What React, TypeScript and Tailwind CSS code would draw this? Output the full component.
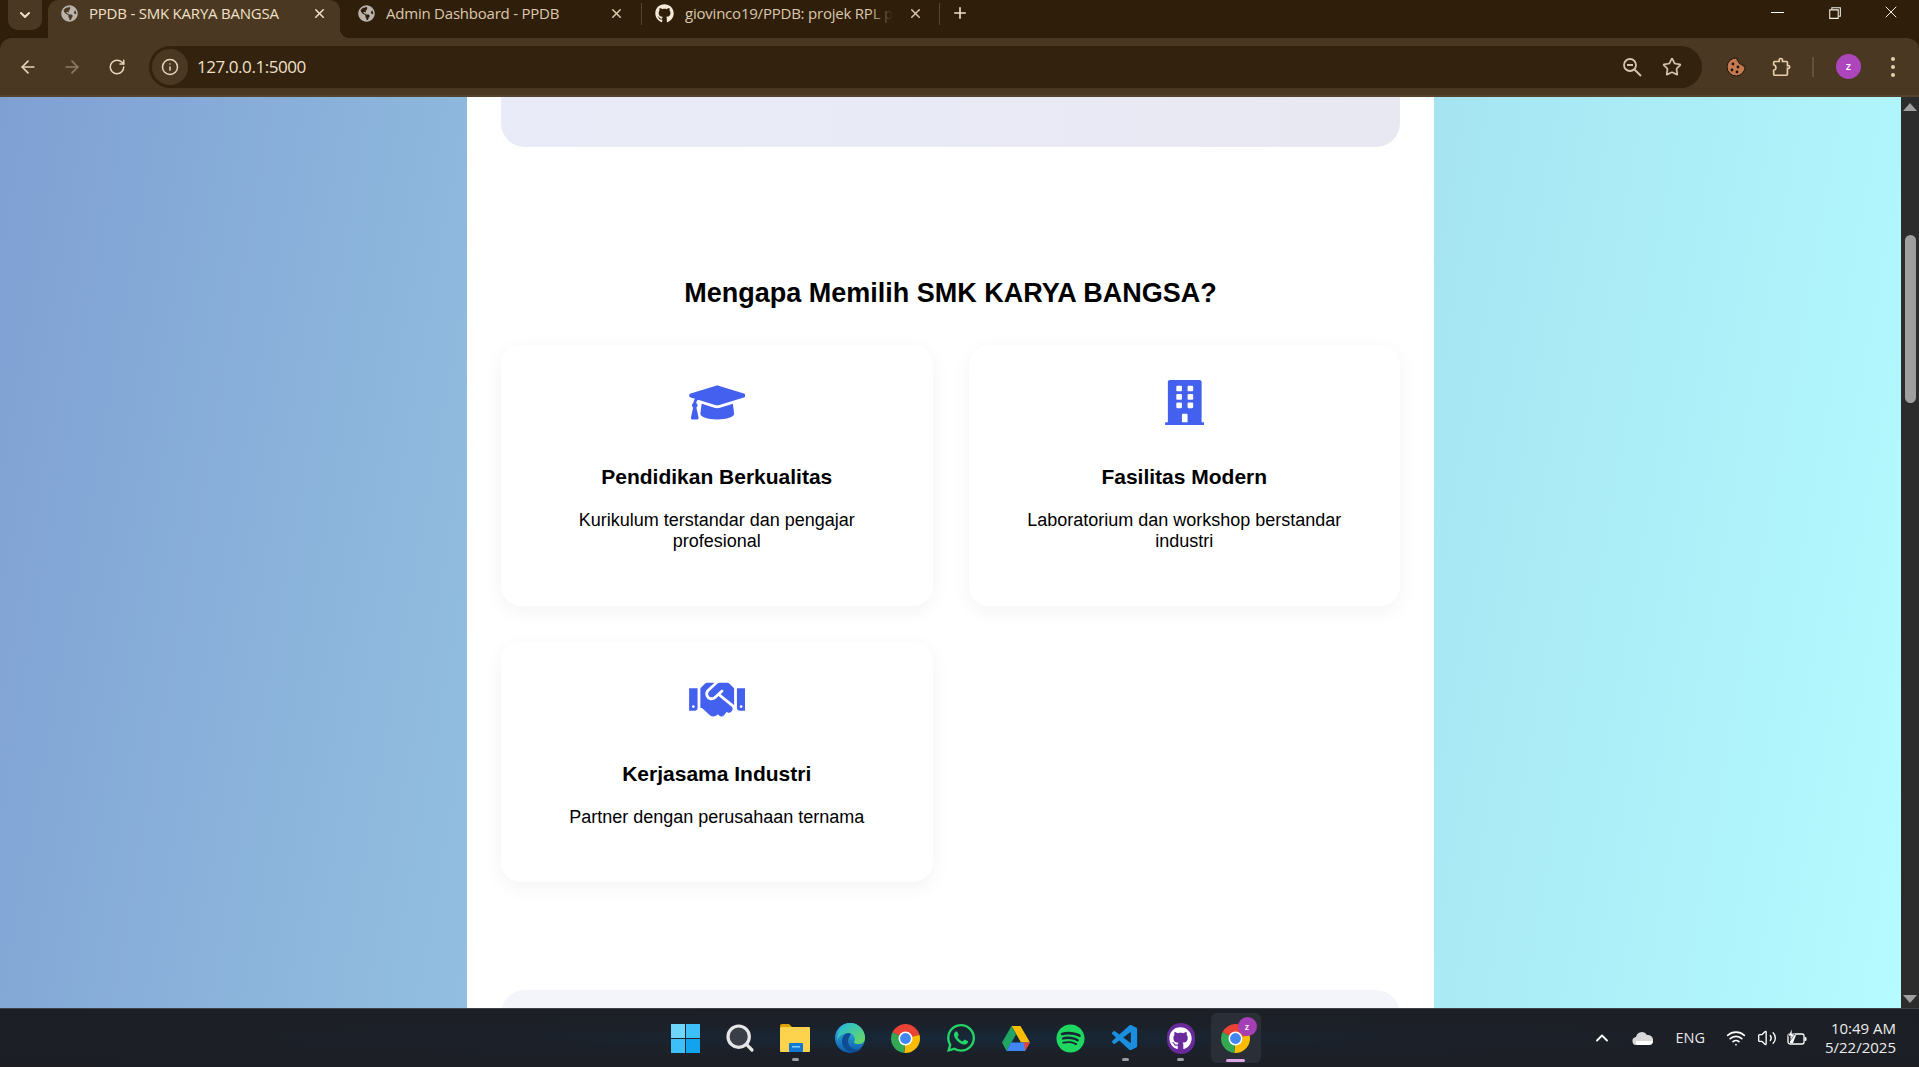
import { ArrowLeft, ArrowRight, RotateCw, Info, Star, X, Plus, ChevronDown, ChevronUp, Wifi, Volume2, Search } from "lucide-react";
import { FaGraduationCap, FaBuilding, FaHandshake, FaGlobeAmericas, FaGithub, FaWhatsapp, FaSpotify } from "react-icons/fa";
import { VscChromeRestore, VscVscode } from "react-icons/vsc";

const uiFont = "font-['Open_Sans',sans-serif]";

function Tab({ title, active, github, fade }: { title: string; active?: boolean; github?: boolean; fade?: boolean }) {
    return (
        <div className={`relative flex items-center h-[38px] w-[292px] pl-[13px] pb-[11px] rounded-t-[10px] ${active ? "bg-[#4b3822] text-[#f0e0c8]" : "text-[#dcc8ac]"}`}>
            {active && <span className="absolute bottom-0 -right-[10px] w-[10px] h-[10px] bg-[radial-gradient(circle_at_100%_0,#2f1e0a_10px,#4b3822_10.5px)]" />}
            {github ? <FaGithub className="text-[#f5ead8] text-[19px] shrink-0" /> : <FaGlobeAmericas className="text-[#b9b3ab] text-[17px] shrink-0" />}
            <div className="relative ml-[11px] w-[208px] overflow-hidden whitespace-nowrap text-[15px] tracking-[-0.22px]">
                {title}
                {fade && <span className="absolute right-0 top-0 h-full w-[24px] bg-gradient-to-r from-transparent to-[#2f1e0a]" />}
            </div>
            <X className="ml-[15px] shrink-0" size={15} strokeWidth={2.4} />
        </div>
    );
}

function ChromeLogo({ size = 29 }: { size?: number }) {
    return (
        <svg width={size} height={size} viewBox="0 0 48 48">
            <path d="M24 24L2.25 13.85A24 24 0 0 1 47.18 17.79Z" fill="#ea4335" />
            <path d="M24 24L47.18 17.79A24 24 0 0 1 21.9 47.9Z" fill="#fbbc04" />
            <path d="M24 24L21.9 47.9A24 24 0 0 1 2.25 13.85Z" fill="#34a853" />
            <circle cx="24" cy="24" r="11.5" fill="#fff" />
            <circle cx="24" cy="24" r="9" fill="#4285f4" />
        </svg>
    );
}

function FeatureCard({ icon, title, text }: { icon: React.ReactNode; title: string; text: string }) {
    return (
        <div className="bg-white rounded-[20px] shadow-[0_5px_20px_rgba(0,0,0,0.05)] pt-[35px] pb-[54px] px-[35px] text-center">
            <div className="h-[45px] flex justify-center text-[#4361ee]">{icon}</div>
            <h3 className="mt-[40px] text-[21px] leading-[24px] font-bold">{title}</h3>
            <p className="mt-[21px] text-[18px] leading-[21px]">{text}</p>
        </div>
    );
}

function TaskIcon({ children, dot }: { children: React.ReactNode; dot?: boolean }) {
    return (
        <div className="relative w-[55.1px] h-[50px] flex items-center justify-center">
            {children}
            {dot && <span className="absolute bottom-[2px] w-[7px] h-[3px] rounded-full bg-[#9a9da3]" />}
        </div>
    );
}

export default function App() {
    return (
        <div className="h-screen flex flex-col overflow-hidden font-['Liberation_Sans',Arial,sans-serif] text-black">
            {/* browser chrome */}
            <div className={`bg-[#2f1e0a] ${uiFont}`}>
                <div className="h-[38px] flex items-start pl-[8px]">
                    <div className="w-[34px] h-[30px] bg-[#4b3822] rounded-b-[10px] flex items-center justify-center text-[#f0e0c8]">
                        <ChevronDown size={16} strokeWidth={3} />
                    </div>
                    <div className="ml-[6px] flex">
                        <Tab title="PPDB - SMK KARYA BANGSA" active />
                        <div className="w-[5px]" />
                        <Tab title="Admin Dashboard - PPDB" />
                        <div className="ml-[4px] w-px h-[22px] mt-[3px] bg-[#5a4630]" />
                        <Tab title="giovinco19/PPDB: projek RPL pe" github fade />
                        <div className="ml-[5px] w-px h-[22px] mt-[3px] bg-[#5a4630]" />
                    </div>
                    <Plus className="ml-[11px] mt-[4px] text-[#f0e0c8]" size={18} strokeWidth={2.2} />
                    <div className="ml-auto flex items-start text-[#f4eee6]">
                        <div className="w-[58px] h-[24px] flex items-center justify-center"><span className="w-[13px] h-px bg-white" /></div>
                        <div className="w-[57px] h-[24px] flex items-center justify-center"><VscChromeRestore size={17} /></div>
                        <div className="w-[56px] h-[24px] flex items-center justify-center"><X size={20} strokeWidth={1.2} /></div>
                    </div>
                </div>
                <div className="h-[59px] bg-[#4b3822] rounded-t-[12px] border-b-2 border-[#55432e] flex items-center text-[#e8d5bb]">
                    <ArrowLeft className="ml-[18px]" size={20} />
                    <ArrowRight className="ml-[24px] text-[#8c7b66]" size={20} />
                    <RotateCw className="ml-[26px]" size={18} />
                    <div className="ml-[23px] w-[1553px] h-[42px] rounded-full bg-[#33220e] flex items-center">
                        <div className="ml-[3px] w-[36px] h-[36px] rounded-full bg-[#4b3822] flex items-center justify-center">
                            <Info size={18} />
                        </div>
                        <span className="ml-[9px] text-[17px] tracking-[-0.45px] text-[#f0e0c8]">127.0.0.1:5000</span>
                        <svg className="ml-auto text-[#d5c5ae]" width="20" height="20" viewBox="0 0 20 20" fill="none" stroke="currentColor" strokeWidth="1.8">
                            <circle cx="8" cy="8" r="6" />
                            <path d="M12.5 12.500L19 19M5 8h6" />
                        </svg>
                        <Star className="ml-[20px] mr-[20px] text-[#d5c5ae]" size={20} />
                    </div>
                    <svg className="ml-[24px]" width="20" height="20" viewBox="0 0 20 20">
                        <path d="M11 1a9 9 0 1 0 8 8c-1.500.5-3-.2-3.300-1.700-1.500.2-2.800-.800-2.900-2.300C11.500 4.700 10.800 2.500 11 1z" fill="#c67a50" stroke="#20140a" strokeWidth="1" />
                        <circle cx="7" cy="7" r="1.400" fill="#20140a" /><circle cx="12" cy="10" r="1.400" fill="#20140a" />
                        <circle cx="6" cy="13" r="1.400" fill="#20140a" /><circle cx="11" cy="15" r="1.400" fill="#20140a" />
                    </svg>
                    <svg className="ml-[24px] text-[#e8cfae]" width="22" height="22" viewBox="0 0 24 24" fill="none" stroke="currentColor" strokeWidth="1.800">
                        <path d="M5 6h5V4.500a1.800 1.800 0 0 1 3.600 0V6h4.400a1 1 0 0 1 1 1v3.500h1a1.500 1.500 0 0 1 0 3h-1V20a1 1 0 0 1-1 1H5a1 1 0 0 1-1-1v-4.500c2-.5 2.500-1.500 2.500-2.500S6 10 4 9.500V7a1 1 0 0 1 1-1z" />
                    </svg>
                    <div className="ml-[20px] w-[2px] h-[20px] bg-[#65513a]" />
                    <div className="ml-[22px] w-[25px] h-[25px] rounded-full bg-[#ad45bd] flex items-center justify-center text-white text-[11px] font-semibold">z</div>
                    <div className="ml-[30px] flex flex-col gap-[4px]">
                        <span className="w-[4px] h-[4px] rounded-full bg-[#e8cfae]" />
                        <span className="w-[4px] h-[4px] rounded-full bg-[#e8cfae]" />
                        <span className="w-[4px] h-[4px] rounded-full bg-[#e8cfae]" />
                    </div>
                </div>
            </div>

            {/* page */}
            <div className="flex-1 min-h-0 flex">
                <div className="flex-1 flex justify-center overflow-hidden bg-[linear-gradient(100deg,#7fa0d3_0%,#8fbade_25%,#a8e8f4_75%,#b5fbff_100%)]">
                    <div className="w-[967px] bg-white px-[34px]">
                        <div className="h-[50px] rounded-b-[24px] bg-gradient-to-r from-[#e9ecf8] to-[#e8e8f2]" />
                        <h2 className="mt-[130px] text-center text-[27px] leading-[32px] font-bold">Mengapa Memilih SMK KARYA BANGSA?</h2>
                        <div className="mt-[36px] grid grid-cols-2 gap-[36px]">
                            <FeatureCard icon={<FaGraduationCap className="w-[56.5px] h-[45px]" />} title="Pendidikan Berkualitas" text="Kurikulum terstandar dan pengajar profesional" />
                            <FeatureCard icon={<FaBuilding className="w-[39.5px] h-[45px]" />} title="Fasilitas Modern" text="Laboratorium dan workshop berstandar industri" />
                            <FeatureCard icon={<FaHandshake className="w-[56.5px] h-[45px]" />} title="Kerjasama Industri" text="Partner dengan perusahaan ternama" />
                        </div>
                        <div className="mt-[108px] h-[60px] rounded-t-[24px] bg-[#f3f5fb]" />
                    </div>
                </div>
                <div className="w-[18px] bg-[#2c2c2c] flex flex-col items-center">
                    <span className="mt-[6px] w-0 h-0 border-x-[7px] border-x-transparent border-b-[8px] border-b-[#9f9f9f]" />
                    <span className="mt-[124px] w-[11px] h-[168px] rounded-full bg-[#9f9f9f]" />
                    <span className="mt-auto mb-[5px] w-0 h-0 border-x-[7px] border-x-transparent border-t-[8px] border-t-[#9f9f9f]" />
                </div>
            </div>

            {/* taskbar */}
            <div className={`h-[59px] shrink-0 border-t border-[#3c4048] bg-[radial-gradient(ellipse_at_50%_50%,#16293a_0%,#1c2028_35%,#1c1e24_100%)] grid grid-cols-[1fr_auto_1fr] items-center text-white ${uiFont}`}>
                <div />
                <div className="flex items-center pl-[2px]">
                    <TaskIcon>
                        <div className="grid grid-cols-2 gap-px w-[29px] h-[29px]">
                            <span className="bg-[#6fd6fb]" /><span className="bg-[#3cc0f7]" />
                            <span className="bg-[#3cc0f7]" /><span className="bg-[#12a3ef]" />
                        </div>
                    </TaskIcon>
                    <TaskIcon>
                        <Search className="text-[#e6e6e6] fill-[#3a3e46]" size={32} strokeWidth={2.4} />
                    </TaskIcon>
                    <TaskIcon dot>
                        <svg width="30" height="28" viewBox="0 0 30 28">
                            <path d="M0 2a2 2 0 0 1 2-2h7l3 3h-12z" fill="#e0a100" />
                            <rect x="0" y="3" width="30" height="25" rx="1" fill="#fdd34d" />
                            <rect x="9" y="19" width="14" height="9" rx="1" fill="#0f78d4" />
                            <rect x="12" y="22" width="8" height="1.500" fill="#7fd0f7" />
                        </svg>
                    </TaskIcon>
                    <TaskIcon>
                        <svg width="30" height="30" viewBox="0 0 30 30">
                            <defs>
                                <linearGradient id="edgeA" x1="0" y1="0" x2="0" y2="1"><stop offset="0" stopColor="#35c1f1" /><stop offset="1" stopColor="#0c59a4" /></linearGradient>
                                <linearGradient id="edgeB" x1="0" y1="0" x2="1" y2="1"><stop offset="0" stopColor="#1fb6e0" /><stop offset="1" stopColor="#6fdc5a" /></linearGradient>
                            </defs>
                            <circle cx="15" cy="15" r="15" fill="url(#edgeA)" />
                            <path d="M15 0a15 15 0 0 1 15 15c0 5-4 6-7 6-3 0-4-1-4-2 2-3 0-9-6-9-5 0-9 3-11 7C3 7 8 0 15 0z" fill="url(#edgeB)" />
                            <path d="M14 10c-5 0-7 4-7 9 0 5 5 10 12 10 3 0 5-1 7-3-8 2-13-2-13-8 0-3 2-5 3-7z" fill="#0f4c92" />
                        </svg>
                    </TaskIcon>
                    <TaskIcon><ChromeLogo /></TaskIcon>
                    <TaskIcon><FaWhatsapp className="text-[#25d366]" size={32} /></TaskIcon>
                    <TaskIcon>
                        <svg width="28" height="25" viewBox="0 0 28 25">
                            <path d="M9.500 0h9L28 16.500h-9z" fill="#fbbc04" />
                            <path d="M9.500 0L0 16.500 4.500 25l9.500-16.500z" fill="#1fa463" />
                            <path d="M4.500 25h18.500L28 16.500H9z" fill="#4285f4" />
                            <path d="M23 25L28 16.500h-6z" fill="#ea4335" />
                        </svg>
                    </TaskIcon>
                    <TaskIcon><FaSpotify className="text-[#1ed760]" size={29} /></TaskIcon>
                    <TaskIcon dot><VscVscode className="text-[#1a8fe0]" size={31} /></TaskIcon>
                    <TaskIcon dot>
                        <div className="w-[28px] h-[31px] rounded-full bg-[#6a2a9b] flex items-center justify-center">
                            <FaGithub className="text-white" size={23} />
                        </div>
                    </TaskIcon>
                    <div className="relative w-[55.1px] h-[50px] flex items-center justify-center">
                        <div className="absolute inset-y-0 left-[3px] right-[3px] rounded-[6px] bg-[#2a2e36]" />
                        <span className="relative"><ChromeLogo /></span>
                        <span className="absolute top-[4px] right-[7px] w-[19px] h-[19px] rounded-full bg-[#a53fb5] flex items-center justify-center text-[9px] font-semibold">z</span>
                        <span className="absolute bottom-[1px] w-[19px] h-[3px] rounded-full bg-[#dba5e6]" />
                    </div>
                </div>
                <div className="flex items-center justify-end pr-[23px]">
                    <ChevronUp size={20} strokeWidth={2.2} />
                    <svg className="ml-[20px]" width="21" height="14" viewBox="0 0 21 14">
                        <path d="M5 14a4 4 0 0 1-1-8 6 6 0 0 1 11-2 5 5 0 0 1 2 10z" fill="#d8d8d8" />
                        <path d="M5 14a4 4 0 0 1-1-4h17a4 4 0 0 1-4 4z" fill="#ffffff" />
                    </svg>
                    <span className="ml-[22px] text-[14.5px] text-[#e8e8e8]">ENG</span>
                    <Wifi className="ml-[21px]" size={20} />
                    <Volume2 className="ml-[11px]" size={20} strokeWidth={1.6} />
                    <svg className="ml-[9px]" width="22" height="18" viewBox="0 0 22 18" fill="none">
                        <rect x="2" y="5" width="16" height="10" rx="2" stroke="#fff" strokeWidth="1.300" />
                        <rect x="18.500" y="8" width="2" height="4" rx="1" fill="#fff" />
                        <path d="M4 6h6l-3 8H4z" fill="#fff" />
                        <path d="M6 0L2 7h3l-1 5 5-7H6z" fill="#fff" stroke="#1c1e24" strokeWidth="0.600" />
                    </svg>
                    <div className="ml-[17px] text-right text-[15px] leading-[19px] text-[#ececec]">
                        <div>10:49 AM</div>
                        <div>5/22/2025</div>
                    </div>
                </div>
            </div>
        </div>
    );
}
